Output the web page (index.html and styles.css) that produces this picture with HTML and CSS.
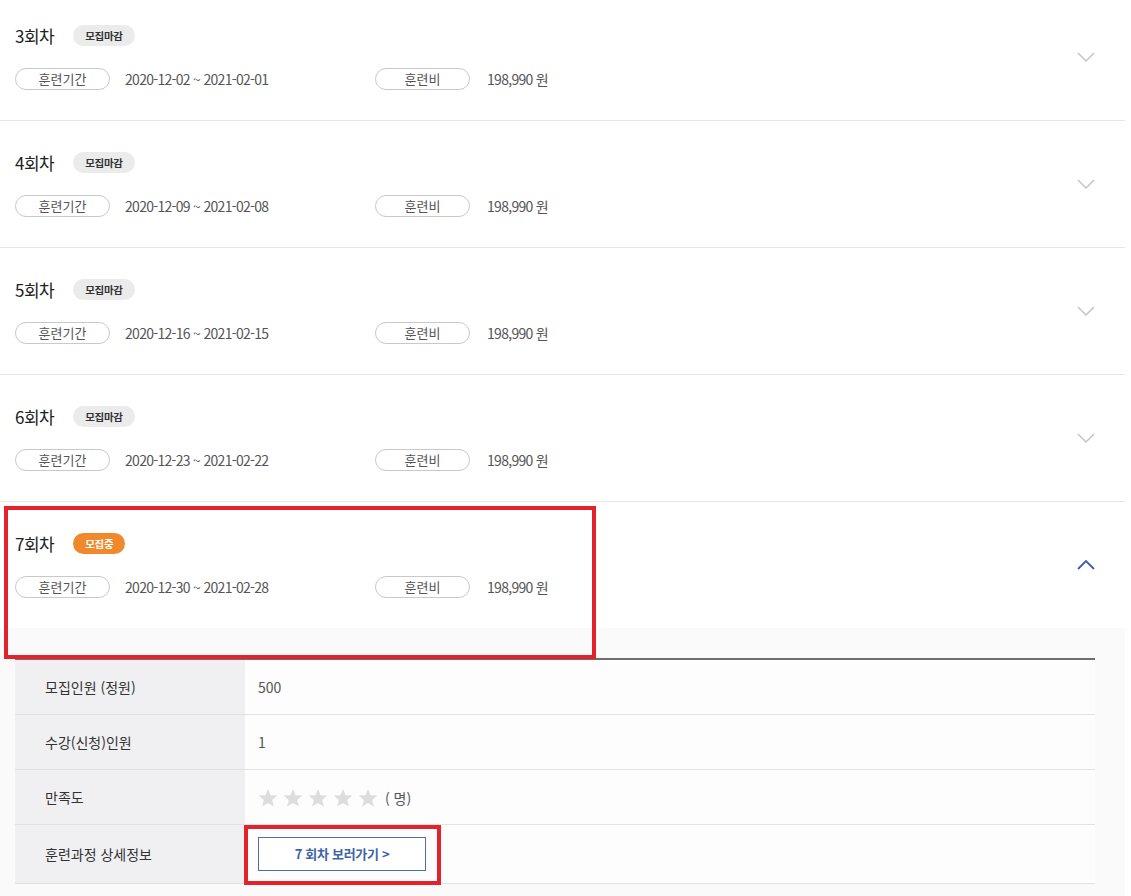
FILE: index.html
```html
<!DOCTYPE html>
<html lang="ko">
<head>
  <meta charset="UTF-8" />
  <title>회차 정보</title>
  <link rel="stylesheet" href="styles.css">
</head>
<body>

<div class="page">
    <ul class="round-list">
        <li class="round">
            <div class="round-head">
                <div class="round-info">
                    <div class="round-title">3회차 <span class="badge">모집마감</span></div>
                    <div class="round-meta">
                        <div class="meta-item"><span class="pill">훈련기간</span><span class="meta-value">2020-12-02 ~ 2021-02-01</span></div>
                        <div class="meta-item"><span class="pill">훈련비</span><span class="meta-value">198,990 원</span></div>
                    </div>
                </div>
                <svg class="chevron" width="18" height="10" viewBox="0 0 18 10"><path d="M1 1 L9 9 L17 1" fill="none" stroke="#c4c4c4" stroke-width="1.5"/></svg>
            </div>
        </li>
        <li class="round">
            <div class="round-head">
                <div class="round-info">
                    <div class="round-title">4회차 <span class="badge">모집마감</span></div>
                    <div class="round-meta">
                        <div class="meta-item"><span class="pill">훈련기간</span><span class="meta-value">2020-12-09 ~ 2021-02-08</span></div>
                        <div class="meta-item"><span class="pill">훈련비</span><span class="meta-value">198,990 원</span></div>
                    </div>
                </div>
                <svg class="chevron" width="18" height="10" viewBox="0 0 18 10"><path d="M1 1 L9 9 L17 1" fill="none" stroke="#c4c4c4" stroke-width="1.5"/></svg>
            </div>
        </li>
        <li class="round">
            <div class="round-head">
                <div class="round-info">
                    <div class="round-title">5회차 <span class="badge">모집마감</span></div>
                    <div class="round-meta">
                        <div class="meta-item"><span class="pill">훈련기간</span><span class="meta-value">2020-12-16 ~ 2021-02-15</span></div>
                        <div class="meta-item"><span class="pill">훈련비</span><span class="meta-value">198,990 원</span></div>
                    </div>
                </div>
                <svg class="chevron" width="18" height="10" viewBox="0 0 18 10"><path d="M1 1 L9 9 L17 1" fill="none" stroke="#c4c4c4" stroke-width="1.5"/></svg>
            </div>
        </li>
        <li class="round">
            <div class="round-head">
                <div class="round-info">
                    <div class="round-title">6회차 <span class="badge">모집마감</span></div>
                    <div class="round-meta">
                        <div class="meta-item"><span class="pill">훈련기간</span><span class="meta-value">2020-12-23 ~ 2021-02-22</span></div>
                        <div class="meta-item"><span class="pill">훈련비</span><span class="meta-value">198,990 원</span></div>
                    </div>
                </div>
                <svg class="chevron" width="18" height="10" viewBox="0 0 18 10"><path d="M1 1 L9 9 L17 1" fill="none" stroke="#c4c4c4" stroke-width="1.5"/></svg>
            </div>
        </li>
        <li class="round open">
            <div class="round-head">
                <div class="round-info">
                    <div class="round-title">7회차 <span class="badge badge-open">모집중</span></div>
                    <div class="round-meta">
                        <div class="meta-item"><span class="pill">훈련기간</span><span class="meta-value">2020-12-30 ~ 2021-02-28</span></div>
                        <div class="meta-item"><span class="pill">훈련비</span><span class="meta-value">198,990 원</span></div>
                    </div>
                </div>
                <svg class="chevron" width="18" height="10" viewBox="0 0 18 10"><path d="M1 9 L9 1 L17 9" fill="none" stroke="#3d5fa8" stroke-width="1.8"/></svg>
            </div>
            <div class="round-detail">
                <table class="detail-table">
                    <tr><th>모집인원 (정원)</th><td>500</td></tr>
                    <tr><th>수강(신청)인원</th><td>1</td></tr>
                    <tr>
                        <th>만족도</th>
                        <td>
                            <span class="stars">
                                <svg width="20" height="20" viewBox="0 0 20 20"><polygon points="10,1 12.6,7.2 19.3,7.6 14.2,11.9 15.8,18.5 10,14.9 4.2,18.5 5.8,11.9 0.7,7.6 7.4,7.2" fill="#dddddd"/></svg>
                                <svg width="20" height="20" viewBox="0 0 20 20"><polygon points="10,1 12.6,7.2 19.3,7.6 14.2,11.9 15.8,18.5 10,14.9 4.2,18.5 5.8,11.9 0.7,7.6 7.4,7.2" fill="#dddddd"/></svg>
                                <svg width="20" height="20" viewBox="0 0 20 20"><polygon points="10,1 12.6,7.2 19.3,7.6 14.2,11.9 15.8,18.5 10,14.9 4.2,18.5 5.8,11.9 0.7,7.6 7.4,7.2" fill="#dddddd"/></svg>
                                <svg width="20" height="20" viewBox="0 0 20 20"><polygon points="10,1 12.6,7.2 19.3,7.6 14.2,11.9 15.8,18.5 10,14.9 4.2,18.5 5.8,11.9 0.7,7.6 7.4,7.2" fill="#dddddd"/></svg>
                                <svg width="20" height="20" viewBox="0 0 20 20"><polygon points="10,1 12.6,7.2 19.3,7.6 14.2,11.9 15.8,18.5 10,14.9 4.2,18.5 5.8,11.9 0.7,7.6 7.4,7.2" fill="#dddddd"/></svg>
                            </span>
                            <span class="star-count">( 명)</span>
                        </td>
                    </tr>
                    <tr>
                        <th>훈련과정 상세정보</th>
                        <td><a class="go-button" href="#">7 회차 보러가기 &gt;</a></td>
                    </tr>
                </table>
            </div>
        </li>
    </ul>

    <!-- highlight boxes -->
    <div class="mark mark-round"></div>
    <div class="mark mark-button"></div>
</div>

</body>
</html>
```
FILE: styles.css
```css
body {
    margin: 0;
    padding: 0;
    background-color: #ffffff;
    font-family: "Noto Sans CJK KR", "Noto Sans", sans-serif;
    color: #333;
}

.page {
    position: relative;
    width: 1125px;
    height: 896px;
    overflow: hidden;
}

.round-list {
    list-style: none;
    margin: -6px 0 0 0;
    padding: 0;
}

.round {
    border-bottom: 1px solid #e6e6e6;
}

.round.open {
    border-bottom: none;
}

.round-head {
    display: flex;
    align-items: center;
    justify-content: space-between;
    height: 126px;
    padding: 0 30px 0 15px;
}

.round-info {
    display: flex;
    flex-direction: column;
    gap: 21px;
    padding-bottom: 1px;
}

.round-title {
    display: flex;
    align-items: center;
    font-size: 17px;
    letter-spacing: -0.5px;
    color: #222;
    height: 24px;
}

.badge {
    display: inline-block;
    margin-left: 19px;
    padding: 0 12px;
    height: 21px;
    line-height: 21px;
    border-radius: 11px;
    background-color: #ebebeb;
    color: #333;
    font-size: 10.5px;
    font-weight: bold;
    letter-spacing: -0.3px;
}

.badge-open {
    background-color: #f0892b;
    color: #fff;
}

.round-meta {
    display: flex;
}

.meta-item {
    display: flex;
    align-items: center;
    width: 360px;
}

.pill {
    display: inline-block;
    box-sizing: border-box;
    width: 95px;
    height: 22px;
    line-height: 20px;
    border: 1px solid #c9c9c9;
    border-radius: 11px;
    text-align: center;
    font-size: 13px;
    color: #555;
}

.meta-value {
    margin-left: 15px;
    font-size: 14px;
    letter-spacing: -0.7px;
    color: #555;
}

.meta-item + .meta-item .meta-value {
    margin-left: 17px;
}

.round-detail {
    background-color: #fafafa;
    padding: 30px 30px 30px 15px;
}

.detail-table {
    width: 100%;
    border-collapse: collapse;
    border-top: 2px solid #6e6e6e;
    font-size: 14px;
}

.detail-table th {
    width: 230px;
    height: 55px;
    padding: 0 0 0 30px;
    box-sizing: border-box;
    background-color: #f0f0f2;
    border-bottom: 1px solid #e2e2e2;
    text-align: left;
    font-weight: normal;
    color: #333;
}

.detail-table td {
    padding: 0 0 0 13px;
    background-color: #fdfdfd;
    border-bottom: 1px solid #e2e2e2;
    color: #555;
}

.detail-table tr:last-child th,
.detail-table tr:last-child td {
    height: 58px;
}

.stars {
    display: inline-flex;
    gap: 5px;
    vertical-align: middle;
}

.star-count {
    margin-left: 3px;
    vertical-align: middle;
    color: #555;
}

.go-button {
    display: inline-block;
    box-sizing: border-box;
    width: 168px;
    height: 34px;
    line-height: 32px;
    border: 1px solid #4f6fa3;
    background-color: #fff;
    text-align: center;
    text-decoration: none;
    font-size: 13px;
    font-weight: bold;
    color: #3e64a8;
    letter-spacing: -0.3px;
}

.mark {
    position: absolute;
    border: 4px solid #e3222b;
    box-sizing: border-box;
}

.mark-round {
    left: 4px;
    top: 506px;
    width: 592px;
    height: 153px;
}

.mark-button {
    left: 244px;
    top: 825px;
    width: 197px;
    height: 60px;
}
```
